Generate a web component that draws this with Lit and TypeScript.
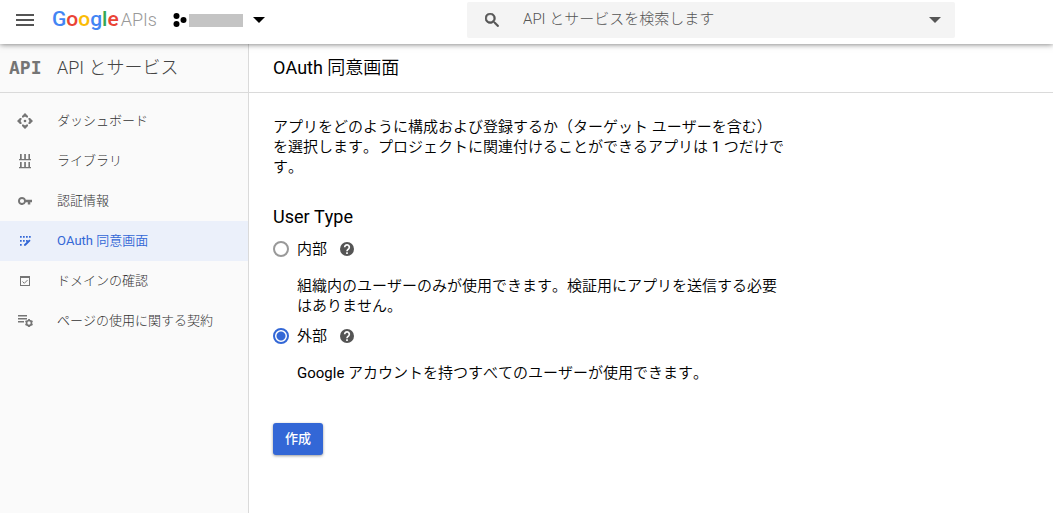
import { LitElement, html, css, svg } from "lit";
import { customElement, state } from "lit/decorators.js";
import { classMap } from "lit/directives/class-map.js";

interface NavItem {
  label: string;
  icon: unknown;
}

const NAV: NavItem[] = [
  {
    label: "ダッシュボード",
    icon: svg`<path d="M8 0 11 3v1.500H9.500L8 3.500 6.500 4.500H5V3zM8 16l3-3v-1.500H9.500L8 12.500l-1.500-1H5V13zM0 8l3-3h1.500v1.500L3.500 8l1 1.500V11H3zM16 8l-3-3h-1.500v1.500l1 1.500-1 1.500V11H13z"/><circle cx="8" cy="8" r="1.300"/>`,
  },
  {
    label: "ライブラリ",
    icon: svg`<path d="M3 1h1.700v5h2.500V1h1.700v5h2.500V1H13v5h1v1.300H2V6h1zM3 9h1.700v5h2.500V9h1.700v5h2.500V9H13v5h1v1.300H2V14h1z"/>`,
  },
  {
    label: "認証情報",
    icon: svg`<path fill-rule="evenodd" d="M5 4a4 4 0 1 0 3.800 5.300h2V11.500h2.500V9.300H15V6.800H8.800A4 4 0 0 0 5 4zM5 5.900a2.100 2.100 0 1 1 0 4.200 2.100 2.100 0 0 1 0-4.200z"/>`,
  },
  {
    label: "OAuth 同意画面",
    icon: svg`<path d="M3 3h1.700v1.700H3zM6 3h1.700v1.700H6zM9 3h1.700v1.700H9zM12 3h1.700v1.700H12zM3 7h1.700v1.700H3zM6 7h1.700v1.700H6zM9 7h1.700v1.700H9zM3 11h1.700v1.700H3zM12.300 6.500l1.300 1.300-5 5H7v-1.300z"/>`,
  },
  {
    label: "ドメインの確認",
    icon: svg`<path fill-rule="evenodd" d="M3 3h10v10H3zM4 5v7h8V5z"/><path d="M5.500 8.500l1.800 1.800 3.200-3.200" fill="none" stroke="currentColor"/>`,
  },
  {
    label: "ページの使用に関する契約",
    icon: svg`<path d="M1 2h9v1.500H1zM1 5h9v1.500H1zM1 8h6v1.500H1z"/><circle cx="12" cy="10" r="2.500" fill="none" stroke="currentColor" stroke-width="1.700"/><path d="M12 6v1.500M12 12.500V14M8.500 8l1.400.800M14.100 11.200l1.400.800M8.500 12l1.400-.800M14.100 8.800l1.400-.800" stroke="currentColor" stroke-width="1.800"/>`,
  },
];

const CARET = svg`<path d="M0 0h12L6 6z"/>`;

@customElement("app-root")
export class AppRoot extends LitElement {
  @state() private selected = 3;
  @state() private userType = "external";

  static styles = css`
    :host {
      display: flex;
      flex-direction: column;
      min-height: 100vh;
      background: #fff;
      color: #000;
      font: 15px/20px Roboto, "Noto Sans CJK JP DemiLight", "Noto Sans CJK JP", sans-serif;
      font-kerning: none;
    }
    * {
      box-sizing: border-box;
    }
    svg {
      display: block;
      flex: none;
      fill: currentColor;
    }
    button {
      border: 0;
      padding: 0;
      background: none;
      color: inherit;
      font: inherit;
      cursor: pointer;
    }
    h1, h2, p, ul {
      margin: 0;
      padding: 0;
      font-weight: inherit;
    }
    .topbar {
      display: grid;
      grid-template-columns: 467px minmax(200px, 488px) 1fr;
      height: 44px;
      padding-bottom: 4px;
      align-items: center;
      position: relative;
      background: #fff;
      box-shadow: 0 0 6px rgba(0, 0, 0, 0.6);
    }
    .brand {
      display: flex;
      align-items: center;
      padding-left: 16px;
    }
    .menu {
      color: #555;
      margin-right: 18px;
    }
    .logo {
      display: flex;
      align-items: baseline;
      gap: 2px;
      width: 106px;
      padding-bottom: 2px;
      color: #999;
      text-decoration: none;
      font-size: 18px;
      font-weight: 300;
    }
    .google {
      font: 500 21px/24px Roboto, sans-serif;
    }
    .blue { color: #4285f4; }
    .red { color: #ea4335; }
    .yellow { color: #fbbc05; }
    .green { color: #34a853; }
    .project {
      display: flex;
      align-items: center;
      margin-left: 15px;
      gap: 2px;
    }
    .project-name {
      width: 54px;
      height: 13px;
      margin-right: 8px;
      background: #c4c4c4;
    }
    .search {
      display: flex;
      align-items: center;
      height: 36px;
      padding: 0 14px 0 18px;
      border-radius: 2px;
      background: #f4f4f4;
      color: #555;
    }
    .search input {
      flex: 1;
      min-width: 0;
      margin-left: 24px;
      padding: 0 0 2px;
      border: 0;
      outline: 0;
      background: none;
      font: 300 15px/20px Roboto, "Noto Sans CJK JP", sans-serif;
      font-kerning: none;
    }
    .search input::placeholder {
      color: #555;
      opacity: 1;
    }
    .body {
      display: flex;
      flex: 1;
    }
    .sidebar {
      flex: none;
      width: 249px;
      border-right: 1px solid #dadada;
      background: #fafafa;
      color: #444;
      font-family: Roboto, "Noto Sans CJK JP", sans-serif;
      font-weight: 300;
    }
    .side-head {
      display: flex;
      align-items: center;
      height: 49px;
      padding-left: 9px;
      gap: 16px;
      border-bottom: 1px solid #dadada;
      font-size: 18px;
    }
    .api-mark {
      width: 32px;
      color: #757575;
      font: bold 18px/24px "DejaVu Sans Mono", monospace;
    }
    .nav {
      padding: 8px 0;
      list-style: none;
    }
    .nav a {
      display: flex;
      align-items: center;
      gap: 24px;
      height: 40px;
      padding-left: 17px;
      color: #333;
      font-size: 13px;
      text-decoration: none;
    }
    .nav span {
      padding-bottom: 1px;
    }
    .nav svg {
      color: #757575;
    }
    .nav a.active {
      background: #ebf0fa;
      color: #3367d6;
      font-family: Roboto, "Noto Sans CJK JP DemiLight", "Noto Sans CJK JP", sans-serif;
      font-weight: 400;
    }
    .nav a.active svg {
      color: #3367d6;
    }
    .main {
      flex: 1;
      min-width: 0;
    }
    .page-head {
      height: 49px;
      padding: 12px 24px;
      border-bottom: 1px solid #dadada;
      font-size: 18px;
      line-height: 24px;
    }
    .content {
      max-width: 560px;
      padding: 24px;
    }
    .types {
      margin: 28px 0 0;
      padding: 0;
      border: 0;
    }
    .types legend {
      padding: 0 0 10px;
      font-size: 18px;
      line-height: 24px;
    }
    .choice {
      display: flex;
      align-items: center;
    }
    .choice label {
      margin: 0 13px 0 8px;
    }
    .choice input {
      appearance: none;
      width: 16px;
      height: 16px;
      margin: 0;
      border: 2px solid #999;
      border-radius: 50%;
    }
    .choice input:checked {
      border-color: #3367d6;
      background: radial-gradient(circle, #3367d6 4px, transparent 5px);
    }
    .help {
      color: #555;
    }
    .desc {
      margin: 17px 0 10px;
      padding-left: 24px;
    }
    .create {
      height: 32px;
      margin-top: 30px;
      padding: 0 12px;
      border-radius: 3px;
      background: #3367d6;
      color: #fff;
      font: 500 13px/20px Roboto, "Noto Sans CJK JP", sans-serif;
      box-shadow: 0 1px 3px rgba(0, 0, 0, 0.4);
    }
  `;

  private choice(id: string, name: string, description: string) {
    return html`
      <div class="choice">
        <input type="radio" name="user-type" id=${id} .checked=${this.userType === id}
          @change=${() => (this.userType = id)} />
        <label for=${id}>${name}</label>
        <button class="help" type="button" aria-label="ヘルプ">
          <svg width="14" height="14" viewBox="2 2 20 20"><circle cx="12" cy="12" r="10"/><path d="M8.700 9.500a3.300 3.300 0 1 1 5.700 2.200C13.100 13 12 13.300 12 15.200" fill="none" stroke="#fff" stroke-width="2.400"/><path d="M10.800 16.600h2.400V19h-2.400z" fill="#fff"/></svg>
        </button>
      </div>
      <p class="desc">${description}</p>
    `;
  }

  render() {
    return html`
      <header class="topbar">
        <div class="brand">
          <button class="menu" type="button" aria-label="メニュー">
            <svg width="18" height="12" viewBox="0 0 18 12"><path d="M0 0h18v2H0zM0 5h18v2H0zM0 10h18v2H0z"/></svg>
          </button>
          <a class="logo" href="#"><span class="google"><span class="blue">G</span><span class="red">o</span><span class="yellow">o</span><span class="blue">g</span><span class="green">l</span><span class="red">e</span></span><span>APIs</span></a>
          <button class="project" type="button" aria-label="プロジェクトを選択">
            <svg width="14" height="14" viewBox="0 0 14 14"><circle cx="3.500" cy="3" r="3"/><circle cx="3.500" cy="11" r="3"/><circle cx="10.500" cy="7" r="3"/></svg>
            <span class="project-name"></span>
            <svg width="12" height="6" viewBox="0 0 12 6">${CARET}</svg>
          </button>
        </div>
        <div class="search" role="search">
          <svg width="14" height="14" viewBox="3 3 17.500 17.500"><path d="M15.500 14h-.790l-.280-.270A6.470 6.470 0 0 0 16 9.500 6.500 6.500 0 1 0 9.500 16c1.610 0 3.090-.590 4.230-1.570l.270.280v.790l5 4.990L20.490 19l-4.990-5zm-6 0C7.010 14 5 11.990 5 9.500S7.010 5 9.500 5 14 7.010 14 9.500 11.990 14 9.500 14z" stroke="currentColor" stroke-width=".8"/></svg>
          <input type="text" aria-label="検索" placeholder="API とサービスを検索します" />
          <button type="button" aria-label="検索オプション">
            <svg width="12" height="6" viewBox="0 0 12 6">${CARET}</svg>
          </button>
        </div>
      </header>
      <div class="body">
        <aside class="sidebar">
          <div class="side-head"><span class="api-mark" aria-hidden="true">API</span><span>API とサービス</span></div>
          <nav>
            <ul class="nav">
              ${NAV.map(
                (item, i) => html`<li>
                  <a href="#" class=${classMap({ active: i === this.selected })}
                    @click=${(e: Event) => { e.preventDefault(); this.selected = i; }}>
                    <svg width="16" height="16" viewBox="0 0 16 16">${item.icon}</svg>
                    <span>${item.label}</span>
                  </a>
                </li>`
              )}
            </ul>
          </nav>
        </aside>
        <main class="main">
          <h1 class="page-head">OAuth 同意画面</h1>
          <form class="content" @submit=${(e: Event) => e.preventDefault()}>
            <p>アプリをどのように構成および登録するか（ターゲット ユーザーを含む）を選択します。プロジェクトに関連付けることができるアプリは 1 つだけです。</p>
            <fieldset class="types">
              <legend>User Type</legend>
              ${this.choice("internal", "内部", "組織内のユーザーのみが使用できます。検証用にアプリを送信する必要はありません。")}
              ${this.choice("external", "外部", "Google アカウントを持つすべてのユーザーが使用できます。")}
            </fieldset>
            <button class="create" type="submit">作成</button>
          </form>
        </main>
      </div>
    `;
  }
}
